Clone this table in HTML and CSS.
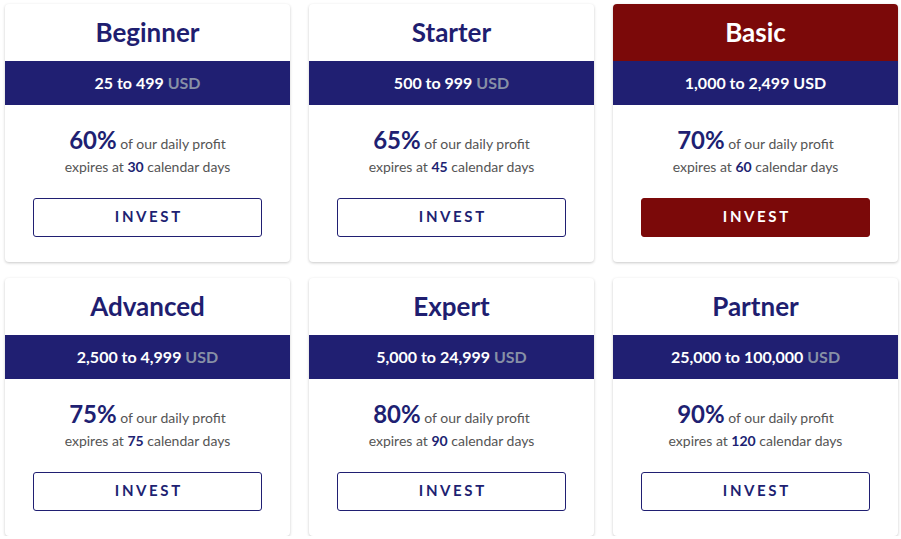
FILE: index.html
```html
<!DOCTYPE html>
<html>
<head>
<meta charset="utf-8">
<link rel="stylesheet" href="styles.css">
</head>
<body>
<div class="grid">
  <div class="card">
    <div class="title">Beginner</div>
    <div class="band">25 to 499 <span class="cur">USD</span></div>
    <div class="body">
      <div class="pct"><b>60%</b> of our daily profit</div>
      <div class="exp">expires at <b>30</b> calendar days</div>
      <button class="btn">INVEST</button>
    </div>
  </div>
  <div class="card">
    <div class="title">Starter</div>
    <div class="band">500 to 999 <span class="cur">USD</span></div>
    <div class="body">
      <div class="pct"><b>65%</b> of our daily profit</div>
      <div class="exp">expires at <b>45</b> calendar days</div>
      <button class="btn">INVEST</button>
    </div>
  </div>
  <div class="card featured">
    <div class="title">Basic</div>
    <div class="band">1,000 to 2,499 <span class="cur">USD</span></div>
    <div class="body">
      <div class="pct"><b>70%</b> of our daily profit</div>
      <div class="exp">expires at <b>60</b> calendar days</div>
      <button class="btn">INVEST</button>
    </div>
  </div>
  <div class="card">
    <div class="title">Advanced</div>
    <div class="band">2,500 to 4,999 <span class="cur">USD</span></div>
    <div class="body">
      <div class="pct"><b>75%</b> of our daily profit</div>
      <div class="exp">expires at <b>75</b> calendar days</div>
      <button class="btn">INVEST</button>
    </div>
  </div>
  <div class="card">
    <div class="title">Expert</div>
    <div class="band">5,000 to 24,999 <span class="cur">USD</span></div>
    <div class="body">
      <div class="pct"><b>80%</b> of our daily profit</div>
      <div class="exp">expires at <b>90</b> calendar days</div>
      <button class="btn">INVEST</button>
    </div>
  </div>
  <div class="card">
    <div class="title">Partner</div>
    <div class="band">25,000 to 100,000 <span class="cur">USD</span></div>
    <div class="body">
      <div class="pct"><b>90%</b> of our daily profit</div>
      <div class="exp">expires at <b>120</b> calendar days</div>
      <button class="btn">INVEST</button>
    </div>
  </div>
</div>
</body>
</html>
```
FILE: styles.css
```css
* { box-sizing: border-box; }
html, body { margin: 0; padding: 0; background: #fff; }
body {
  font-family: Lato, "Open Sans", sans-serif;
  padding: 4px 3px 0 5px;
}
.grid {
  display: grid;
  grid-template-columns: repeat(3, 285px);
  column-gap: 19px;
  row-gap: 16px;
}
.card {
  background: #fff;
  border-radius: 4px;
  box-shadow: 0 1px 3px rgba(0,0,0,0.22);
  overflow: hidden;
  text-align: center;
}
.title {
  height: 57px;
  line-height: 57px;
  font-size: 26px;
  font-weight: 700;
  color: #1f1e70;
}
.band {
  height: 44px;
  line-height: 44px;
  background: #201f72;
  color: #fff;
  font-weight: 700;
  font-size: 16px;
}
.cur { color: #8790a6; }
.body {
  padding: 20px 28px 25px;
  color: #555;
}
.pct {
  font-size: 14px;
  line-height: 30px;
  height: 30px;
}
.pct b {
  font-size: 24px;
  color: #201f72;
  font-weight: 700;
}
.exp {
  font-size: 14px;
  line-height: 24px;
}
.exp b { color: #201f72; font-weight: 700; }
.btn {
  display: block;
  width: 100%;
  height: 39px;
  margin-top: 19px;
  border: 1px solid #201f72;
  border-radius: 3px;
  background: #fff;
  color: #201f72;
  font-family: Lato, sans-serif;
  font-weight: 700;
  font-size: 15px;
  letter-spacing: 2.6px;
  padding: 0 0 3px 2.6px;
  cursor: pointer;
}
.featured .title { background: #7b0909; color: #fff; }
.featured .cur { color: #fff; }
.featured .btn { background: #7b0909; border-color: #7b0909; color: #fff; }
```
